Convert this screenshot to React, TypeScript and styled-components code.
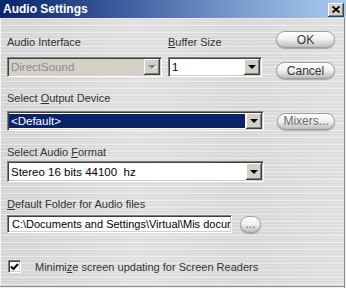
import styled, { createGlobalStyle } from "styled-components";

const GlobalStyle = createGlobalStyle`
  html, body {
    margin: 0;
    padding: 0;
  }
  body {
    font-family: "Liberation Sans", Arial, sans-serif;
    font-size: 11px;
  }
`;

const Window = styled.div`
  width: 346px;
  height: 288px;
  display: flex;
  flex-direction: column;
  overflow: hidden;
`;

const TitleBar = styled.div`
  height: 18px;
  flex: none;
  display: flex;
  align-items: center;
  justify-content: space-between;
  padding: 0 2px 0 3px;
  background: linear-gradient(90deg, #0a246a 0%, #3b5c9e 35%, #7d9dce 70%, #a8cbf1 100%);
  color: #fff;
  font-weight: bold;
  font-size: 12px;
`;

const CloseButton = styled.div`
  width: 16px;
  height: 14px;
  box-sizing: border-box;
  background: #d4d0c8;
  box-shadow: inset -1px -1px #404040, inset 1px 1px #fff, inset -2px -2px #808080;
  display: flex;
  align-items: center;
  justify-content: center;
  margin-top: 1px;
`;

const Body = styled.div`
  flex: 1;
  padding: 13px 11px 0 7px;
  background:
    repeating-linear-gradient(
      180deg,
      rgba(255, 255, 255, 0.4) 0 1px,
      rgba(0, 0, 0, 0.02) 1px 3px,
      rgba(255, 255, 255, 0.2) 3px 4px,
      rgba(0, 0, 0, 0.04) 4px 5px,
      rgba(255, 255, 255, 0) 5px 7px
    ),
    linear-gradient(90deg, #d8d8d8, #e3e3e3 40%, #dcdcdc 70%, #e2e2e2);
  box-shadow: inset -1px 0 #f0f0f0, inset -2px 0 #8a8a8a, inset 0 -1px #f0f0f0, inset 0 -2px #8a8a8a,
    inset 1px 0 #f4f4f4;
  color: #333;
`;

const TopSection = styled.div`
  display: flex;
  justify-content: space-between;
`;

const FieldRow = styled.div`
  display: flex;
  gap: 6px;
  padding-top: 5px;
`;

const Field = styled.div<{ $mt?: number; $gap: number }>`
  display: flex;
  flex-direction: column;
  gap: ${(p) => p.$gap}px;
  margin-top: ${(p) => p.$mt ?? 0}px;
`;

const Label = styled.div`
  line-height: 13px;
  height: 13px;
  white-space: nowrap;
`;

const ButtonStack = styled.div`
  display: flex;
  flex-direction: column;
  gap: 14px;
`;

const PillButton = styled.div<{ $w: number; $muted?: boolean }>`
  width: ${(p) => p.$w}px;
  height: 17px;
  box-sizing: border-box;
  border: 1px solid #9c9c9c;
  border-radius: 9px;
  background: linear-gradient(180deg, #ffffff 0%, #f2f2f2 45%, #d6d6d6 75%, #bdbdbd 100%);
  box-shadow: 0 1px 1px rgba(0, 0, 0, 0.25);
  color: ${(p) => (p.$muted ? "#6a6a6a" : "#333")};
  font-size: 12px;
  display: flex;
  align-items: center;
  justify-content: center;
  line-height: 1;
`;

const Combo = styled.div<{ $w: number; $h?: number; $disabled?: boolean }>`
  width: ${(p) => p.$w}px;
  height: ${(p) => p.$h ?? 20}px;
  box-sizing: border-box;
  border: 1px solid;
  border-color: #808080 #fff #fff #808080;
  background: ${(p) => (p.$disabled ? "#d4d0c8" : "#fff")};
  box-shadow: inset 1px 1px #404040, inset -1px -1px #d4d0c8;
  padding: 1px;
  display: flex;
  align-items: stretch;
  color: ${(p) => (p.$disabled ? "#8c8c8c" : "#000")};
  font-size: 11.5px;
`;

const ComboText = styled.div<{ $selected?: boolean }>`
  flex: 1;
  display: flex;
  align-items: center;
  padding-left: 2px;
  margin: 1px 1px 1px 0;
  background: ${(p) => (p.$selected ? "#0a246a" : "transparent")};
  color: ${(p) => (p.$selected ? "#fff" : "inherit")};
  white-space: nowrap;
  overflow: hidden;
`;

const ArrowButton = styled.div<{ $disabled?: boolean }>`
  width: 16px;
  flex: none;
  background: #d4d0c8;
  box-shadow: inset -1px -1px #404040, inset 1px 1px #fff, inset -2px -2px #808080;
  display: flex;
  align-items: center;
  justify-content: center;

  &::after {
    content: "";
    border-left: 4px solid transparent;
    border-right: 4px solid transparent;
    border-top: 4px solid ${(p) => (p.$disabled ? "#808080" : "#000")};
    filter: ${(p) => (p.$disabled ? "drop-shadow(1px 1px 0 #fff)" : "none")};
  }
`;

const SideRow = styled.div<{ $gap: number }>`
  display: flex;
  align-items: center;
  gap: ${(p) => p.$gap}px;
`;

const TextInput = styled.div`
  width: 225px;
  height: 18px;
  box-sizing: border-box;
  border: 1px solid;
  border-color: #808080 #fff #fff #808080;
  box-shadow: inset 1px 1px #404040, inset -1px -1px #d4d0c8;
  background: #fff;
  color: #000;
  font-size: 11px;
  padding-left: 4px;
  display: flex;
  align-items: center;
  white-space: nowrap;
  overflow: hidden;
`;

const CheckRow = styled.div`
  display: flex;
  align-items: center;
  gap: 14px;
  margin-top: 27px;
  padding-left: 1px;
`;

const CheckBox = styled.div`
  width: 13px;
  height: 13px;
  box-sizing: border-box;
  border: 1px solid;
  border-color: #808080 #fff #fff #808080;
  box-shadow: inset 1px 1px #404040, inset -1px -1px #d4d0c8;
  background: #fff;
  display: flex;
  align-items: center;
  justify-content: center;
`;

const U = styled.span`
  text-decoration: underline;
`;

export default function App() {
  return (
    <Window>
      <GlobalStyle />
      <TitleBar>
        <span>Audio Settings</span>
        <CloseButton>
          <svg width="8" height="7" viewBox="0 0 8 7">
            <path d="M0.5 0.5 L7.5 6.5 M7.5 0.5 L0.5 6.5" stroke="#000" strokeWidth="1.8" />
          </svg>
        </CloseButton>
      </TitleBar>
      <Body>
        <TopSection>
          <FieldRow>
            <Field $gap={8}>
              <Label>Audio Interface</Label>
              <Combo $w={155} $disabled>
                <ComboText>DirectSound</ComboText>
                <ArrowButton $disabled />
              </Combo>
            </Field>
            <Field $gap={8}>
              <Label>
                <U>B</U>uffer Size
              </Label>
              <Combo $w={94}>
                <ComboText>1</ComboText>
                <ArrowButton />
              </Combo>
            </Field>
          </FieldRow>
          <ButtonStack>
            <PillButton $w={59}>OK</PillButton>
            <PillButton $w={59}>Cancel</PillButton>
          </ButtonStack>
        </TopSection>

        <Field $mt={13} $gap={6}>
          <Label>
            Select <U>O</U>utput Device
          </Label>
          <SideRow $gap={13}>
            <Combo $w={258}>
              <ComboText $selected>&lt;Default&gt;</ComboText>
              <ArrowButton />
            </Combo>
            <PillButton $w={58} $muted>
              Mixers...
            </PillButton>
          </SideRow>
        </Field>

        <Field $mt={15} $gap={2}>
          <Label>
            Select Audio <U>F</U>ormat
          </Label>
          <Combo $w={257} $h={21}>
            <ComboText>Stereo 16 bits 44100&nbsp;&nbsp;hz</ComboText>
            <ArrowButton />
          </Combo>
        </Field>

        <Field $mt={16} $gap={4}>
          <Label>
            <U>D</U>efault Folder for Audio files
          </Label>
          <SideRow $gap={8}>
            <TextInput>C:\Documents and Settings\Virtual\Mis docur</TextInput>
            <PillButton $w={21} $muted>
              ...
            </PillButton>
          </SideRow>
        </Field>

        <CheckRow>
          <CheckBox>
            <svg width="9" height="8" viewBox="0 0 9 8">
              <path d="M1 3.5 L3.5 6 L8 1" stroke="#000" strokeWidth="2" fill="none" />
            </svg>
          </CheckBox>
          <span>
            Minimi<U>z</U>e screen updating for Screen Readers
          </span>
        </CheckRow>
      </Body>
    </Window>
  );
}
